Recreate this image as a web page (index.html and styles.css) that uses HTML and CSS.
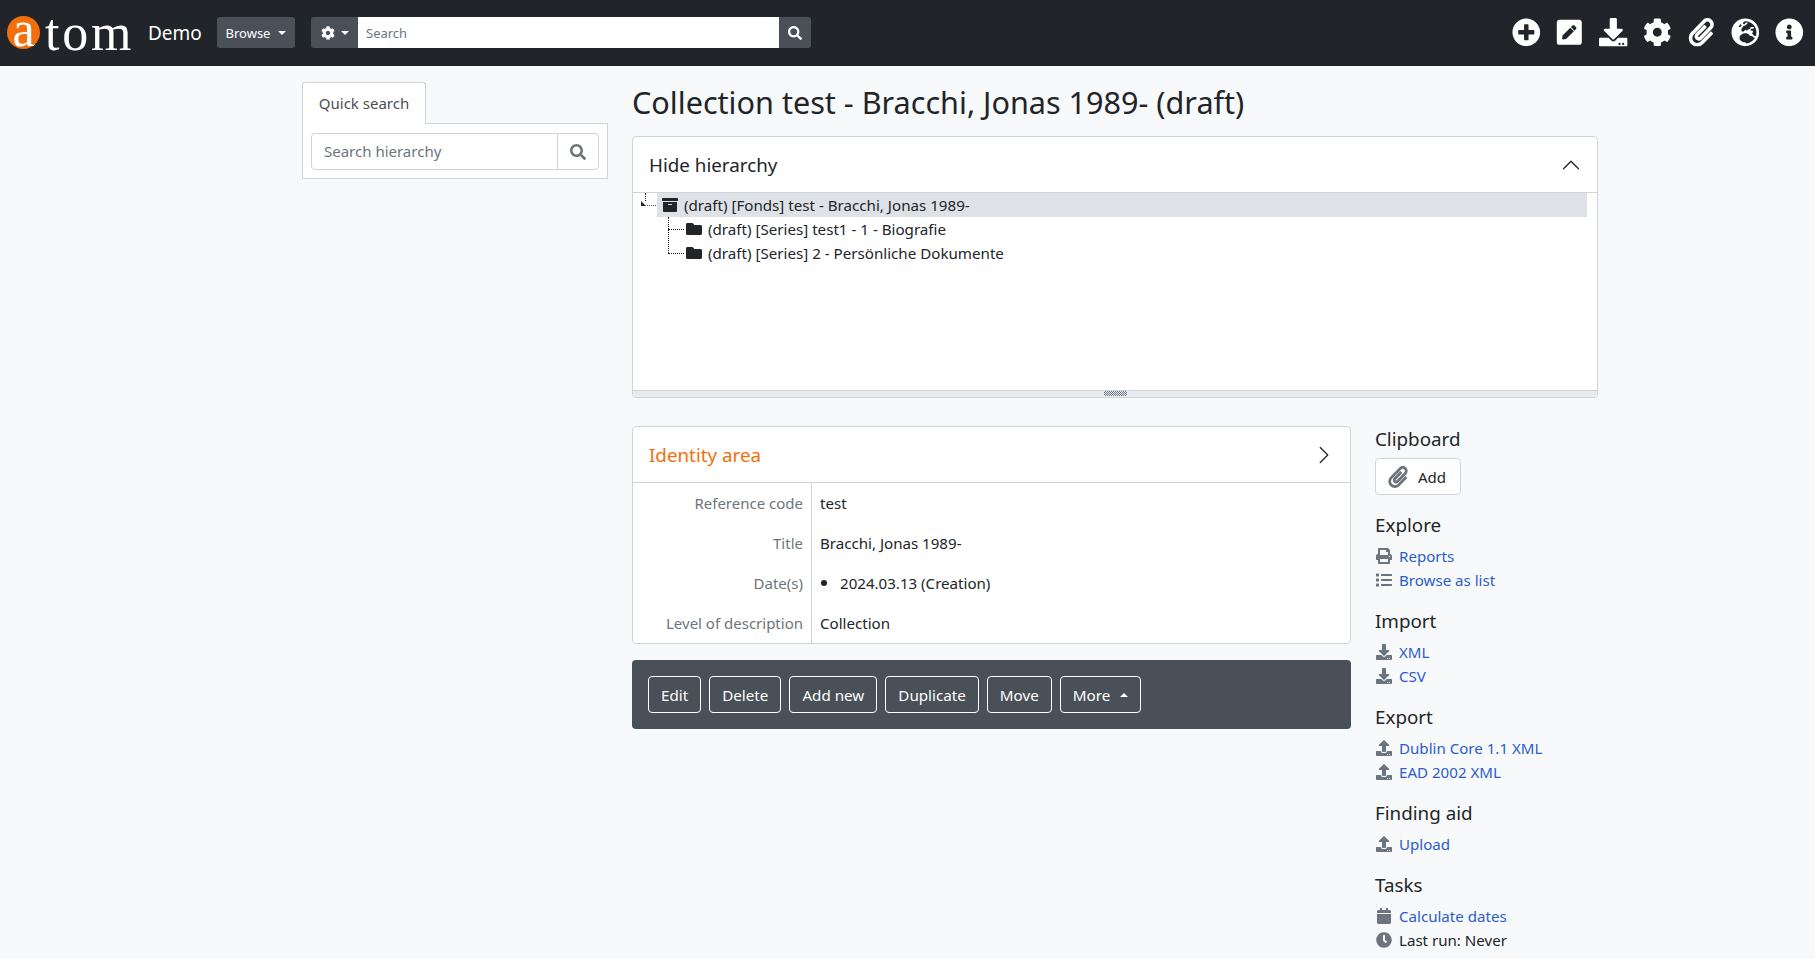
FILE: index.html
```html
<!DOCTYPE html>
<html lang="en">
<head>
<meta charset="utf-8">
<title>Collection test - Bracchi, Jonas 1989- (draft)</title>
<link rel="stylesheet" href="styles.css">
</head>
<body>
<svg class="defs" aria-hidden="true">
<symbol id="i-search" viewBox="0 0 512 512"><path d="M505 442.7L405.3 343c-4.5-4.5-10.6-7-17-7H372c27.6-35.3 44-79.7 44-128C416 93.1 322.9 0 208 0S0 93.1 0 208s93.1 208 208 208c48.3 0 92.7-16.4 128-44v16.3c0 6.4 2.5 12.5 7 17l99.7 99.7c9.4 9.4 24.6 9.4 33.9 0l28.3-28.3c9.4-9.4 9.4-24.6.1-34zM208 336c-70.7 0-128-57.2-128-128 0-70.7 57.2-128 128-128 70.7 0 128 57.2 128 128 0 70.7-57.2 128-128 128z"/></symbol>
<symbol id="i-plus" viewBox="0 0 512 512"><path d="M256 8C119 8 8 119 8 256s111 248 248 248 248-111 248-248S393 8 256 8zm144 276c0 6.6-5.4 12-12 12h-92v92c0 6.6-5.4 12-12 12h-56c-6.6 0-12-5.4-12-12v-92h-92c-6.6 0-12-5.4-12-12v-56c0-6.6 5.4-12 12-12h92v-92c0-6.6 5.4-12 12-12h56c6.6 0 12 5.4 12 12v92h92c6.6 0 12 5.4 12 12v56z"/></symbol>
<symbol id="i-pen" viewBox="0 0 448 512"><path d="M400 480H48c-26.5 0-48-21.5-48-48V80c0-26.5 21.5-48 48-48h352c26.5 0 48 21.5 48 48v352c0 26.5-21.5 48-48 48zM238.1 177.9L102.4 313.6l-6.3 57.1c-.8 7.6 5.6 14.1 13.3 13.3l57.1-6.3L302.2 242c2.3-2.3 2.3-6.1 0-8.5L246.7 178c-2.5-2.4-6.3-2.4-8.6-.1zM345 165.1L314.9 135c-9.4-9.4-24.6-9.4-33.9 0l-23.1 23.1c-2.3 2.3-2.3 6.1 0 8.5l55.5 55.5c2.3 2.3 6.1 2.3 8.5 0L345 199c9.3-9.3 9.3-24.5 0-33.9z"/></symbol>
<symbol id="i-download" viewBox="0 0 512 512"><path d="M216 0h80c13.3 0 24 10.7 24 24v168h87.7c17.8 0 26.7 21.5 14.1 34.1L269.7 378.3c-7.5 7.5-19.8 7.5-27.3 0L90.1 226.1c-12.6-12.6-3.7-34.1 14.1-34.1H192V24c0-13.3 10.7-24 24-24zm296 376v112c0 13.3-10.7 24-24 24H24c-13.3 0-24-10.7-24-24V376c0-13.3 10.7-24 24-24h146.7l49 49c20.1 20.1 52.5 20.1 72.6 0l49-49H488c13.3 0 24 10.7 24 24zm-124 88c0-11-9-20-20-20s-20 9-20 20 9 20 20 20 20-9 20-20zm64 0c0-11-9-20-20-20s-20 9-20 20 9 20 20 20 20-9 20-20z"/></symbol>
<symbol id="i-upload" viewBox="0 0 512 512"><path d="M296 384h-80c-13.3 0-24-10.7-24-24V192h-87.7c-17.8 0-26.7-21.5-14.1-34.1L242.3 5.7c7.5-7.5 19.8-7.5 27.3 0l152.2 152.2c12.6 12.6 3.7 34.1-14.1 34.1H320v168c0 13.3-10.7 24-24 24zm216-8v112c0 13.3-10.7 24-24 24H24c-13.3 0-24-10.7-24-24V376c0-13.3 10.7-24 24-24h136v8c0 30.9 25.1 56 56 56h80c30.9 0 56-25.1 56-56v-8h136c13.3 0 24 10.7 24 24zm-124 88c0-11-9-20-20-20s-20 9-20 20 9 20 20 20 20-9 20-20zm64 0c0-11-9-20-20-20s-20 9-20 20 9 20 20 20 20-9 20-20z"/></symbol>
<symbol id="i-cog" viewBox="0 0 512 512"><path d="M487.4 315.7l-42.6-24.6c4.3-23.2 4.3-47 0-70.2l42.6-24.6c4.9-2.8 7.1-8.6 5.5-14-11.1-35.6-30-67.8-54.7-94.6-3.8-4.1-10-5.1-14.8-2.3L380.8 110c-17.9-15.4-38.5-27.3-60.8-35.1V25.8c0-5.6-3.9-10.5-9.4-11.7-36.7-8.2-74.3-7.8-109.2 0-5.5 1.2-9.4 6.1-9.4 11.7V75c-22.2 7.9-42.8 19.8-60.8 35.1L88.7 85.5c-4.9-2.8-11-1.9-14.8 2.3-24.7 26.7-43.6 58.9-54.7 94.6-1.7 5.4.6 11.2 5.5 14L67.3 221c-4.3 23.2-4.3 47 0 70.2l-42.6 24.6c-4.9 2.8-7.1 8.6-5.5 14 11.1 35.6 30 67.8 54.7 94.6 3.8 4.1 10 5.1 14.8 2.3l42.6-24.6c17.9 15.4 38.5 27.3 60.8 35.1v49.2c0 5.6 3.9 10.5 9.4 11.7 36.7 8.2 74.3 7.8 109.2 0 5.5-1.2 9.4-6.1 9.4-11.7v-49.2c22.2-7.9 42.8-19.8 60.8-35.1l42.6 24.6c4.9 2.8 11 1.9 14.8-2.3 24.7-26.7 43.6-58.9 54.7-94.6 1.5-5.5-.7-11.3-5.6-14.1zM256 336c-44.1 0-80-35.9-80-80s35.9-80 80-80 80 35.9 80 80-35.9 80-80 80z"/></symbol>
<symbol id="i-clip" viewBox="0 0 448 512"><path d="M43.246 466.142c-58.43-60.289-57.341-157.511 1.386-217.581L254.392 34c44.316-45.332 116.351-45.336 160.671 0 43.89 44.894 43.943 117.329 0 162.276L232.214 383.128c-29.855 30.537-78.633 30.111-107.982-.998-28.275-29.97-27.368-77.473 1.452-106.953l143.743-146.835c6.182-6.314 16.312-6.422 22.626-.241l22.861 22.379c6.315 6.182 6.422 16.312.241 22.626L171.427 319.927c-4.932 5.045-5.236 13.428-.648 18.292 4.372 4.634 11.245 4.711 15.688.165l182.849-186.851c19.613-20.062 19.613-52.725-.011-72.798-19.189-19.627-49.957-19.637-69.154 0L90.39 293.295c-34.763 35.56-35.299 93.12-1.191 128.313 34.01 35.093 88.985 35.137 123.058.286l172.06-175.999c6.177-6.319 16.307-6.433 22.626-.256l22.877 22.364c6.319 6.177 6.434 16.307.256 22.626l-172.06 175.998c-59.576 60.938-155.943 60.216-214.77-.485z"/></symbol>
<symbol id="i-globe" viewBox="0 0 496 512"><path d="M248 8C111 8 0 119 0 256s111 248 248 248 248-111 248-248S385 8 248 8zm200 248c0 22.5-3.9 44.2-10.8 64.4h-20.3c-4.3 0-8.4-1.7-11.4-4.8l-32-32.6c-4.5-4.6-4.5-12.1.1-16.7l12.5-12.5v-8.7c0-3-1.2-5.9-3.3-8l-9.4-9.4c-2.1-2.1-5-3.3-8-3.3h-16c-6.2 0-11.3-5.1-11.3-11.3 0-3 1.2-5.9 3.3-8l9.4-9.4c2.1-2.1 5-3.3 8-3.3h32c6.2 0 11.3-5.1 11.3-11.3v-9.4c0-6.2-5.1-11.3-11.3-11.3h-36.7c-8.8 0-16 7.2-16 16v4.5c0 6.9-4.4 13-10.9 15.2l-31.6 10.5c-3.3 1.1-5.5 4.1-5.5 7.6v2.2c0 4.4-3.6 8-8 8h-16c-4.4 0-8-3.6-8-8s-3.6-8-8-8H247c-3 0-5.8 1.7-7.2 4.4l-9.4 18.7c-2.7 5.4-8.2 8.8-14.3 8.8H194c-8.8 0-16-7.2-16-16V199c0-4.2 1.7-8.3 4.7-11.3l20.1-20.1c4.6-4.6 7.2-10.9 7.2-17.5 0-3.4 2.2-6.5 5.5-7.6l40-13.3c1.7-.6 3.2-1.5 4.4-2.7l26.8-26.8c2.1-2.1 3.3-5 3.3-8 0-6.2-5.1-11.3-11.3-11.3H258l-16 16v8c0 4.4-3.6 8-8 8h-16c-4.4 0-8-3.6-8-8v-20c0-2.5 1.2-4.9 3.2-6.4l28.9-21.7c1.9-.1 3.8-.3 5.7-.3C358.3 56 448 145.7 448 256zM130.1 149.1c0-3 1.2-5.9 3.3-8l25.4-25.4c2.1-2.1 5-3.3 8-3.3 6.2 0 11.3 5.1 11.3 11.3v16c0 3-1.2 5.9-3.3 8l-9.4 9.4c-2.1 2.1-5 3.3-8 3.3h-16c-6.2 0-11.3-5.1-11.3-11.3zm128 306.4v-7.1c0-8.8-7.2-16-16-16h-20.2c-10.8 0-26.7-5.3-35.4-11.8l-22.2-16.7c-11.5-8.6-18.2-22.1-18.2-36.4v-23.9c0-16 8.4-30.8 22.1-39l42.9-25.7c7.1-4.2 15.2-6.5 23.4-6.5h31.2c10.9 0 21.4 3.9 29.6 10.9l43.2 37.1h18.3c8.5 0 16.6 3.4 22.6 9.4l17.3 17.3c3.4 3.4 8.1 5.3 12.9 5.3H423c-32.4 58.9-93.8 99.5-164.9 103.1z"/></symbol>
<symbol id="i-info" viewBox="0 0 512 512"><path d="M256 8C119.043 8 8 119.083 8 256c0 136.997 111.043 248 248 248s248-111.003 248-248C504 119.083 392.957 8 256 8zm0 110c23.196 0 42 18.804 42 42s-18.804 42-42 42-42-18.804-42-42 18.804-42 42-42zm56 254c0 6.627-5.373 12-12 12h-88c-6.627 0-12-5.373-12-12v-24c0-6.627 5.373-12 12-12h12v-64h-12c-6.627 0-12-5.373-12-12v-24c0-6.627 5.373-12 12-12h64c6.627 0 12 5.373 12 12v100h12c6.627 0 12 5.373 12 12v24z"/></symbol>
<symbol id="i-print" viewBox="0 0 512 512"><path d="M448 192V77.25c0-8.49-3.37-16.62-9.37-22.63L393.37 9.37c-6-6-14.14-9.37-22.63-9.37H96C78.33 0 64 14.33 64 32v160c-35.35 0-64 28.65-64 64v112c0 8.84 7.16 16 16 16h48v96c0 17.67 14.33 32 32 32h320c17.67 0 32-14.33 32-32v-96h48c8.84 0 16-7.16 16-16V256c0-35.35-28.65-64-64-64zm-64 256H128v-96h256v96zm0-224H128V64h192v48c0 8.84 7.16 16 16 16h48v96zm48 72c-13.25 0-24-10.75-24-24 0-13.26 10.75-24 24-24s24 10.74 24 24c0 13.25-10.75 24-24 24z"/></symbol>
<symbol id="i-list" viewBox="0 0 512 512"><path d="M80 368H16a16 16 0 0 0-16 16v64a16 16 0 0 0 16 16h64a16 16 0 0 0 16-16v-64a16 16 0 0 0-16-16zm0-320H16A16 16 0 0 0 0 64v64a16 16 0 0 0 16 16h64a16 16 0 0 0 16-16V64a16 16 0 0 0-16-16zm0 160H16a16 16 0 0 0-16 16v64a16 16 0 0 0 16 16h64a16 16 0 0 0 16-16v-64a16 16 0 0 0-16-16zm416 176H176a16 16 0 0 0-16 16v32a16 16 0 0 0 16 16h320a16 16 0 0 0 16-16v-32a16 16 0 0 0-16-16zm0-320H176a16 16 0 0 0-16 16v32a16 16 0 0 0 16 16h320a16 16 0 0 0 16-16V80a16 16 0 0 0-16-16zm0 160H176a16 16 0 0 0-16 16v32a16 16 0 0 0 16 16h320a16 16 0 0 0 16-16v-32a16 16 0 0 0-16-16z"/></symbol>
<symbol id="i-calendar" viewBox="0 0 448 512"><path d="M12 192h424c6.6 0 12 5.4 12 12v260c0 26.5-21.5 48-48 48H48c-26.5 0-48-21.5-48-48V204c0-6.6 5.4-12 12-12zm436-44v-36c0-26.5-21.5-48-48-48h-48V12c0-6.6-5.4-12-12-12h-40c-6.6 0-12 5.4-12 12v52H160V12c0-6.6-5.4-12-12-12h-40c-6.6 0-12 5.4-12 12v52H48C21.5 64 0 85.5 0 112v36c0 6.6 5.4 12 12 12h424c6.6 0 12-5.4 12-12z"/></symbol>
<symbol id="i-clock" viewBox="0 0 512 512"><path d="M256,8C119,8,8,119,8,256S119,504,256,504,504,393,504,256,393,8,256,8Zm92.49,313h0l-20,25a16,16,0,0,1-22.49,2.5h0l-67-49.72a40,40,0,0,1-15-31.23V112a16,16,0,0,1,16-16h32a16,16,0,0,1,16,16V256l58,42.5A16,16,0,0,1,348.49,321Z"/></symbol>
<symbol id="i-archive" viewBox="0 0 512 512"><path d="M32 448c0 17.7 14.3 32 32 32h384c17.7 0 32-14.3 32-32V160H32v288zm160-212c0-6.6 5.4-12 12-12h104c6.6 0 12 5.4 12 12v8c0 6.6-5.4 12-12 12H204c-6.6 0-12-5.4-12-12v-8zM480 32H32C14.3 32 0 46.3 0 64v48c0 8.8 7.2 16 16 16h480c8.8 0 16-7.2 16-16V64c0-17.7-14.3-32-32-32z"/></symbol>
<symbol id="i-folder" viewBox="0 0 512 512"><path d="M464 128H272l-64-64H48C21.49 64 0 85.49 0 112v288c0 26.51 21.49 48 48 48h416c26.51 0 48-21.49 48-48V176c0-26.51-21.49-48-48-48z"/></symbol>
<symbol id="i-chev-up" viewBox="0 0 16 16"><path fill-rule="evenodd" d="M1.646 11.354a.5.5 0 0 1 0-.708l6-6a.5.5 0 0 1 .708 0l6 6a.5.5 0 0 1-.708.708L8 5.707l-5.646 5.647a.5.5 0 0 1-.708 0z"/></symbol>
<symbol id="i-chev-right" viewBox="0 0 16 16"><path fill-rule="evenodd" d="M4.646 1.646a.5.5 0 0 1 .708 0l6 6a.5.5 0 0 1 0 .708l-6 6a.5.5 0 0 1-.708-.708L10.293 8 4.646 2.354a.5.5 0 0 1 0-.708z"/></symbol>
</svg>

<header class="navbar">
  <a class="logo"><span class="logo-a">a</span><span class="logo-rest">tom</span></a>
  <span class="site-name">Demo</span>
  <button class="nav-btn browse">Browse<span class="caret"></span></button>
  <div class="nav-search">
    <button class="nav-btn gear"><svg class="ico ico-14"><use href="#i-cog"/></svg><span class="caret"></span></button>
    <div class="nav-input">Search</div>
    <button class="nav-btn go"><svg class="ico ico-14"><use href="#i-search"/></svg></button>
  </div>
  <nav class="nav-icons">
    <svg class="ico nav-ico"><use href="#i-plus"/></svg>
    <svg class="ico nav-ico"><use href="#i-pen"/></svg>
    <svg class="ico nav-ico"><use href="#i-download"/></svg>
    <svg class="ico nav-ico"><use href="#i-cog"/></svg>
    <svg class="ico nav-ico"><use href="#i-clip"/></svg>
    <svg class="ico nav-ico"><use href="#i-globe"/></svg>
    <svg class="ico nav-ico"><use href="#i-info"/></svg>
  </nav>
</header>

<div class="wrapper">
  <aside class="sidebar">
    <div class="tab">Quick search</div>
    <div class="tab-pane">
      <div class="input-group">
        <div class="input-text">Search hierarchy</div>
        <div class="input-btn"><svg class="ico ico-16"><use href="#i-search"/></svg></div>
      </div>
    </div>
  </aside>
  <main class="main">
    <h1 class="title">Collection test - Bracchi, Jonas 1989- (draft)</h1>
    <section class="card hierarchy">
      <div class="card-head"><span>Hide hierarchy</span><svg class="ico chev"><use href="#i-chev-up"/></svg></div>
      <div class="tree">
        <div class="tree-row root">
          <span class="tree-toggle"></span>
          <div class="tree-sel"><svg class="ico ico-16 tree-ico"><use href="#i-archive"/></svg>(draft) [Fonds] test - Bracchi, Jonas 1989-</div>
        </div>
        <div class="tree-row child first"><svg class="ico ico-16 tree-ico"><use href="#i-folder"/></svg>(draft) [Series] test1 - 1 - Biografie</div>
        <div class="tree-row child"><svg class="ico ico-16 tree-ico"><use href="#i-folder"/></svg>(draft) [Series] 2 - Persönliche Dokumente</div>
      </div>
      <div class="resizer"><span class="grip"></span></div>
    </section>
    <div class="lower">
      <div class="content">
        <section class="card identity">
          <div class="card-head id-head"><span class="orange">Identity area</span><svg class="ico chev"><use href="#i-chev-right"/></svg></div>
          <div class="field"><div class="label">Reference code</div><div class="value">test</div></div>
          <div class="field"><div class="label">Title</div><div class="value">Bracchi, Jonas 1989-</div></div>
          <div class="field"><div class="label">Date(s)</div><div class="value"><span class="bullet"></span>2024.03.13 (Creation)</div></div>
          <div class="field"><div class="label">Level of description</div><div class="value">Collection</div></div>
        </section>
        <div class="actions">
          <button class="act">Edit</button>
          <button class="act">Delete</button>
          <button class="act">Add new</button>
          <button class="act">Duplicate</button>
          <button class="act">Move</button>
          <button class="act">More<span class="caret up"></span></button>
        </div>
      </div>
      <aside class="context">
        <h2 class="ctx-h">Clipboard</h2>
        <button class="clip-btn"><svg class="ico clip-ico"><use href="#i-clip"/></svg>Add</button>
        <h2 class="ctx-h">Explore</h2>
        <ul class="ctx-list">
          <li><svg class="ico li-ico"><use href="#i-print"/></svg><a>Reports</a></li>
          <li><svg class="ico li-ico"><use href="#i-list"/></svg><a>Browse as list</a></li>
        </ul>
        <h2 class="ctx-h">Import</h2>
        <ul class="ctx-list">
          <li><svg class="ico li-ico"><use href="#i-download"/></svg><a>XML</a></li>
          <li><svg class="ico li-ico"><use href="#i-download"/></svg><a>CSV</a></li>
        </ul>
        <h2 class="ctx-h">Export</h2>
        <ul class="ctx-list">
          <li><svg class="ico li-ico"><use href="#i-upload"/></svg><a>Dublin Core 1.1 XML</a></li>
          <li><svg class="ico li-ico"><use href="#i-upload"/></svg><a>EAD 2002 XML</a></li>
        </ul>
        <h2 class="ctx-h">Finding aid</h2>
        <ul class="ctx-list">
          <li><svg class="ico li-ico"><use href="#i-upload"/></svg><a>Upload</a></li>
        </ul>
        <h2 class="ctx-h">Tasks</h2>
        <ul class="ctx-list">
          <li><svg class="ico li-ico"><use href="#i-calendar"/></svg><a>Calculate dates</a></li>
          <li><svg class="ico li-ico"><use href="#i-clock"/></svg><span>Last run: Never</span></li>
        </ul>
      </aside>
    </div>
  </main>
</div>
</body>
</html>
```

FILE: styles.css
```css
* { box-sizing: border-box; }
html, body { margin: 0; padding: 0; height: 959px; overflow: hidden; }
body { background: #f8f9fa; color: #212529; font-family: "Noto Sans", "Open Sans", sans-serif; font-size: 15px; line-height: 24px; }
.defs { width: 0; height: 0; position: absolute; }
.ico { fill: currentColor; display: block; flex: none; }
.ico-14 { width: 14px; height: 14px; }
.ico-16 { width: 16px; height: 16px; }
button { font: inherit; cursor: pointer; }

.navbar { height: 66px; background: #212529; display: flex; align-items: center; color: #fff; padding: 0 0 1px 7px; }
.logo { display: flex; align-items: center; width: 126px; height: 40px; }
.logo-a { width: 33px; height: 33px; border-radius: 50%; background: #f36f0c; color: #fff; font-family: "Liberation Serif", serif; font-size: 50px; line-height: 26px; text-align: center; flex: none; }
.logo-rest { font-family: "Liberation Serif", serif; font-size: 52px; line-height: 40px; color: #fff; letter-spacing: 2.8px; margin-left: 5px; }
.site-name { font-size: 19px; margin-left: 15px; width: 69px; }
.nav-btn { background: #495057; color: #fff; border: 0; border-radius: 3px; height: 31px; font-size: 13px; display: flex; align-items: center; padding: 0; }
.browse { width: 78px; justify-content: center; }
.caret { width: 0; height: 0; border-left: 4px solid transparent; border-right: 4px solid transparent; border-top: 4px solid currentColor; margin-left: 8px; }
.caret.up { border-top: 0; border-bottom: 4px solid currentColor; }
.nav-search { display: flex; margin-left: 16px; }
.gear { width: 47px; justify-content: center; border-radius: 3px 0 0 3px; }
.gear .caret { margin-left: 6px; }
.nav-input { width: 421px; height: 31px; background: #fff; color: #6c757d; font-size: 13px; line-height: 32px; padding-left: 8px; }
.go { width: 32px; justify-content: center; border-radius: 0 3px 3px 0; }
.nav-icons { margin-left: auto; display: flex; gap: 15.4px; padding-right: 11px; }
.nav-ico { width: 28.6px; height: 28.6px; }

.wrapper { display: flex; padding: 16px 0 0 302px; }
.sidebar { width: 306px; flex: none; }
.tab { width: 124px; height: 42px; border: 1px solid #ced4da; border-bottom: 0; border-radius: 3px 3px 0 0; background: #fff; color: #495057; font-size: 15px; line-height: 40px; text-align: center; position: relative; z-index: 1; margin-bottom: -1px; }
.tab-pane { height: 56px; border: 1px solid #ced4da; background: #fff; padding: 9px 8px; }
.input-group { display: flex; height: 37px; border: 1px solid #ced4da; border-radius: 4px; }
.input-text { flex: 1; color: #6c757d; padding-left: 12px; line-height: 35px; font-size: 15px; }
.input-btn { width: 41px; border-left: 1px solid #ced4da; color: #6c757d; display: flex; align-items: center; justify-content: center; }

.main { margin-left: 24px; width: 966px; flex: none; }
.title { margin: 0; font-size: 30.6px; font-weight: 400; line-height: 40px; height: 54px; }
.card { background: #fff; border: 1px solid #ced4da; border-radius: 4px; }
.hierarchy { height: 262px; display: flex; flex-direction: column; }
.card-head { height: 56px; flex: none; border-bottom: 1px solid #ced4da; display: flex; align-items: center; justify-content: space-between; padding: 0 16px; font-size: 18.8px; }
.chev { width: 20px; height: 20px; color: #212529; }
.tree { flex: 1; position: relative; font-size: 15.15px; color: #212529; }
.tree-row { height: 24px; display: flex; align-items: center; white-space: nowrap; }
.root { padding-right: 10px; position: relative; }
.tree-toggle { width: 24px; height: 24px; flex: none; position: relative; }
.tree-toggle::before { content: ""; position: absolute; left: 12px; top: 0; height: 8px; border-left: 1px dotted #212529; }
.tree-toggle::after { content: ""; position: absolute; left: 8px; top: 8px; width: 16px; height: 6px; background: linear-gradient(to top right, #212529 48%, transparent 52%) 0 0 / 5px 5px no-repeat, repeating-linear-gradient(to right, #555 0 1px, transparent 1px 2px) 6px 4px / 10px 1px no-repeat; }
.tree-sel { flex: 1; height: 24px; background: #dee2e6; display: flex; align-items: center; padding-left: 5px; }
.tree-sel .tree-ico { margin-right: 6px; }
.child { padding-left: 53px; position: relative; }
.child .tree-ico { margin-right: 6px; }
.child::before { content: ""; position: absolute; left: 35px; top: 12px; width: 16px; border-top: 1px dotted #212529; }
.child::after { content: ""; position: absolute; left: 35px; top: -12px; height: 24px; border-left: 1px dotted #212529; }
.child.first::after { top: 0; height: 12px; }
.resizer { height: 7px; flex: none; background: #e9ecef; border-top: 1px solid #ced4da; display: flex; justify-content: center; border-radius: 0 0 4px 4px; }
.grip { width: 23px; height: 5px; background: repeating-conic-gradient(#6c757d 0 25%, transparent 0 50%) 0 0 / 2px 2px; }

.lower { display: flex; margin-top: 28px; }
.content { width: 719px; flex: none; }
.identity { height: 218px; }
.id-head { height: 56px; }
.orange { color: #f36f0c; }
.field { height: 40px; display: flex; font-size: 15.1px; }
.label { width: 179px; border-right: 1px solid #ced4da; text-align: right; padding: 8px 8px 0 0; color: #6c757d; font-size: 15px; }
.value { padding: 8px 0 0 8px; display: flex; align-items: flex-start; }
.bullet { width: 6px; height: 6px; background: #212529; border-radius: 50%; margin: 9px 13px 0 1px; }
.actions { margin-top: 16px; height: 69px; background: #495057; border-radius: 4px; display: flex; gap: 8px; padding: 16px; }
.act { height: 37px; background: transparent; border: 1px solid #fff; border-radius: 4px; color: #fff; font-size: 15.2px; padding: 0 12px; display: flex; align-items: center; }
.act .caret { margin-left: 10px; }

.context { margin-left: 24px; width: 223px; flex: none; padding-top: 1px; }
.ctx-h { margin: 17px 0 7px; font-size: 18.8px; font-weight: 400; line-height: 24px; height: 24px; }
.ctx-h:first-child { margin-top: 0; }
.clip-btn { width: 86px; height: 37px; background: #fff; border: 1px solid #ced4da; border-radius: 4px; display: flex; align-items: center; color: #212529; font-size: 15px; padding: 0 0 0 12px; }
.clip-btn + .ctx-h { margin-top: 18px; }
.clip-ico { width: 20px; height: 22px; color: #6c757d; margin-right: 10px; }
.ctx-list { list-style: none; margin: 0; padding: 0; font-size: 15.1px; }
.ctx-list li { height: 24px; display: flex; align-items: center; }
.ctx-list a { color: #2b5dcb; }
.li-ico { width: 16px; height: 16px; color: #6c757d; margin: 0 7px 0 1px; }
```
